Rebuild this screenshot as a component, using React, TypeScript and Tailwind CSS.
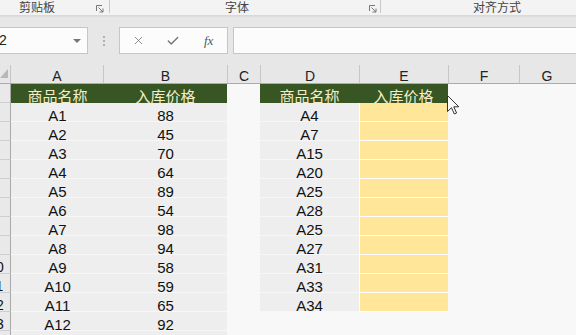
import { X, Check } from "lucide-react";

const left: [string, number][] = [
  ["A1", 88], ["A2", 45], ["A3", 70], ["A4", 64], ["A5", 89], ["A6", 54],
  ["A7", 98], ["A8", 94], ["A9", 58], ["A10", 59], ["A11", 65], ["A12", 92],
];
const right = ["A4", "A7", "A15", "A20", "A25", "A28", "A25", "A27", "A31", "A33", "A34"];

const cell = "text-center text-[15px] leading-[15px] pt-[5px] text-[#111] font-['Liberation_Sans',sans-serif]";
const gray = "bg-[#eeeeee] border-b border-[#f7f7f7]";

const Launcher = () => (
  <svg width="8" height="8" viewBox="0 0 8 8" className="shrink-0">
    <path d="M0.5 6V0.5H6" fill="none" stroke="#777" strokeWidth="1" />
    <path d="M2.5 2.5L7 7M7 3.5V7H3.5" fill="none" stroke="#777" strokeWidth="1" />
  </svg>
);

const ColHead = ({ w, label }: { w: string; label: string }) => (
  <div className={`${w} shrink-0 border-r border-[#c6c6c6] text-center text-[14px] leading-[14px] pt-[4px] text-[#222]`}>
    {label}
  </div>
);

export default function App() {
  const rows = Array.from({ length: 13 }, (_, i) => i);
  return (
    <div className="relative w-[576px] h-[335px] overflow-hidden bg-[#f8f8f8] font-['Liberation_Sans','Noto_Sans_CJK_SC',sans-serif]">
      {/* ribbon group labels */}
      <div className="flex h-[15px] bg-[#f3f3f3] text-[12px] leading-[13px] text-[#444] font-['Noto_Sans_CJK_SC',sans-serif]">
        <div className="flex w-[110px] shrink-0 items-start">
          <span className="ml-[19px]">剪贴板</span>
          <span className="ml-auto mt-[5px] mr-[5px]"><Launcher /></span>
          <span className="w-px h-[13px] bg-[#c8c8c8]" />
        </div>
        <div className="flex w-[271px] shrink-0 items-start">
          <span className="ml-[115px]">字体</span>
          <span className="ml-auto mt-[5px] mr-[3px]"><Launcher /></span>
          <span className="w-px h-[13px] bg-[#c8c8c8]" />
        </div>
        <div className="flex-1">
          <span className="ml-[92px]">对齐方式</span>
        </div>
      </div>

      {/* formula bar */}
      <div className="h-[50px] bg-[#e7e7e7] bg-gradient-to-b from-[#d6d6d6] to-[#e7e7e7] to-[6%] pt-[12px]">
        <div className="flex h-[27px] items-stretch">
          <div className="flex w-[88px] shrink-0 items-center border border-l-0 border-[#c6c6c6] bg-[#fcfcfc]">
            <span className="text-[14px] text-[#222] -ml-[1px]">2</span>
            <svg width="8" height="4" viewBox="0 0 8 4" className="ml-auto mr-[6px]">
              <path d="M0 0H8L4 4Z" fill="#777" />
            </svg>
          </div>
          <div className="flex w-[31px] shrink-0 flex-col items-center justify-center gap-[2px]">
            <span className="w-[2px] h-[2px] bg-[#b0b0b0]" />
            <span className="w-[2px] h-[2px] bg-[#b0b0b0]" />
            <span className="w-[2px] h-[2px] bg-[#b0b0b0]" />
          </div>
          <div className="flex w-[109px] shrink-0 items-center border border-[#c6c6c6] bg-[#fcfcfc]">
            <X size={13} strokeWidth={1.5} className="ml-[12px] text-[#777]" />
            <Check size={14} strokeWidth={2.5} className="ml-[21px] text-[#777]" />
            <span className="ml-[24px] text-[13px] italic text-[#555] font-['Liberation_Serif',serif]">fx</span>
          </div>
          <div className="ml-[5px] flex-1 border border-r-0 border-[#c6c6c6] bg-[#fcfcfc]" />
        </div>
      </div>

      {/* column headers */}
      <div className="flex h-[19px] bg-[#e7e7e7] border-b border-[#ababab] font-['Liberation_Sans',sans-serif]">
        <div className="relative w-[11px] shrink-0 border-r border-[#c6c6c6]">
          <svg width="8" height="9" viewBox="0 0 8 9" className="absolute left-0 top-[4px]">
            <path d="M8 0V9H0Z" fill="#b8b8b8" />
          </svg>
        </div>
        <ColHead w="w-[93px]" label="A" />
        <ColHead w="w-[124px]" label="B" />
        <ColHead w="w-[33px]" label="C" />
        <ColHead w="w-[99px]" label="D" />
        <ColHead w="w-[89px]" label="E" />
        <ColHead w="w-[71px]" label="F" />
        <div className="flex-1 text-center text-[14px] leading-[14px] pt-[4px] text-[#222] pr-[2px]">G</div>
      </div>

      {/* header row */}
      <div className="flex h-[19px] text-[15px] leading-[15px] text-[#f4eecf] font-['Noto_Sans_CJK_SC',sans-serif]">
        <div className="w-[11px] shrink-0 border-r border-b border-r-[#a8a8a8] border-b-[#cfcfcf] bg-[#e9e9e9]" />
        <div className="w-[93px] shrink-0 bg-[#375623] text-center pt-[4px]">商品名称</div>
        <div className="w-[123px] shrink-0 bg-[#375623] text-center pt-[4px]">入库价格</div>
        <div className="w-[33px] shrink-0" />
        <div className="w-[99px] shrink-0 bg-[#375623] text-center pt-[4px]">商品名称</div>
        <div className="w-[89px] shrink-0 bg-[#375623] text-center pt-[4px]">入库价格</div>
      </div>

      {/* body rows */}
      {rows.map((i) => (
        <div key={i} className="flex h-[19px]">
          <div className="w-[11px] shrink-0 overflow-hidden border-r border-b border-r-[#a8a8a8] border-b-[#cfcfcf] bg-[#e9e9e9]">
            <div className="-ml-[17px] w-[26px] text-center text-[14px] leading-[14px] pt-[5px] text-[#111]">{i + 2}</div>
          </div>
          <div className={`w-[93px] shrink-0 ${gray} ${cell}`}>{left[i]?.[0]}</div>
          <div className={`w-[123px] shrink-0 ${gray} ${cell}`}>{left[i]?.[1]}</div>
          <div className="w-[33px] shrink-0" />
          {i < right.length ? (
            <>
              <div className={`w-[99px] shrink-0 ${gray} ${cell}`}>{right[i]}</div>
              <div className="w-[89px] shrink-0 bg-[#ffe699] border-l border-b border-white" />
            </>
          ) : null}
        </div>
      ))}

      {/* mouse pointer */}
      <svg width="13" height="20" viewBox="0 0 13 20" className="absolute left-[447px] top-[95px]">
        <path d="M0.5 0.5V16.5L4.5 12.7L7.3 19L9.6 18L6.8 11.8H11.8Z" fill="#fafafa" stroke="#333" strokeWidth="1" strokeLinejoin="round" />
      </svg>
    </div>
  );
}
